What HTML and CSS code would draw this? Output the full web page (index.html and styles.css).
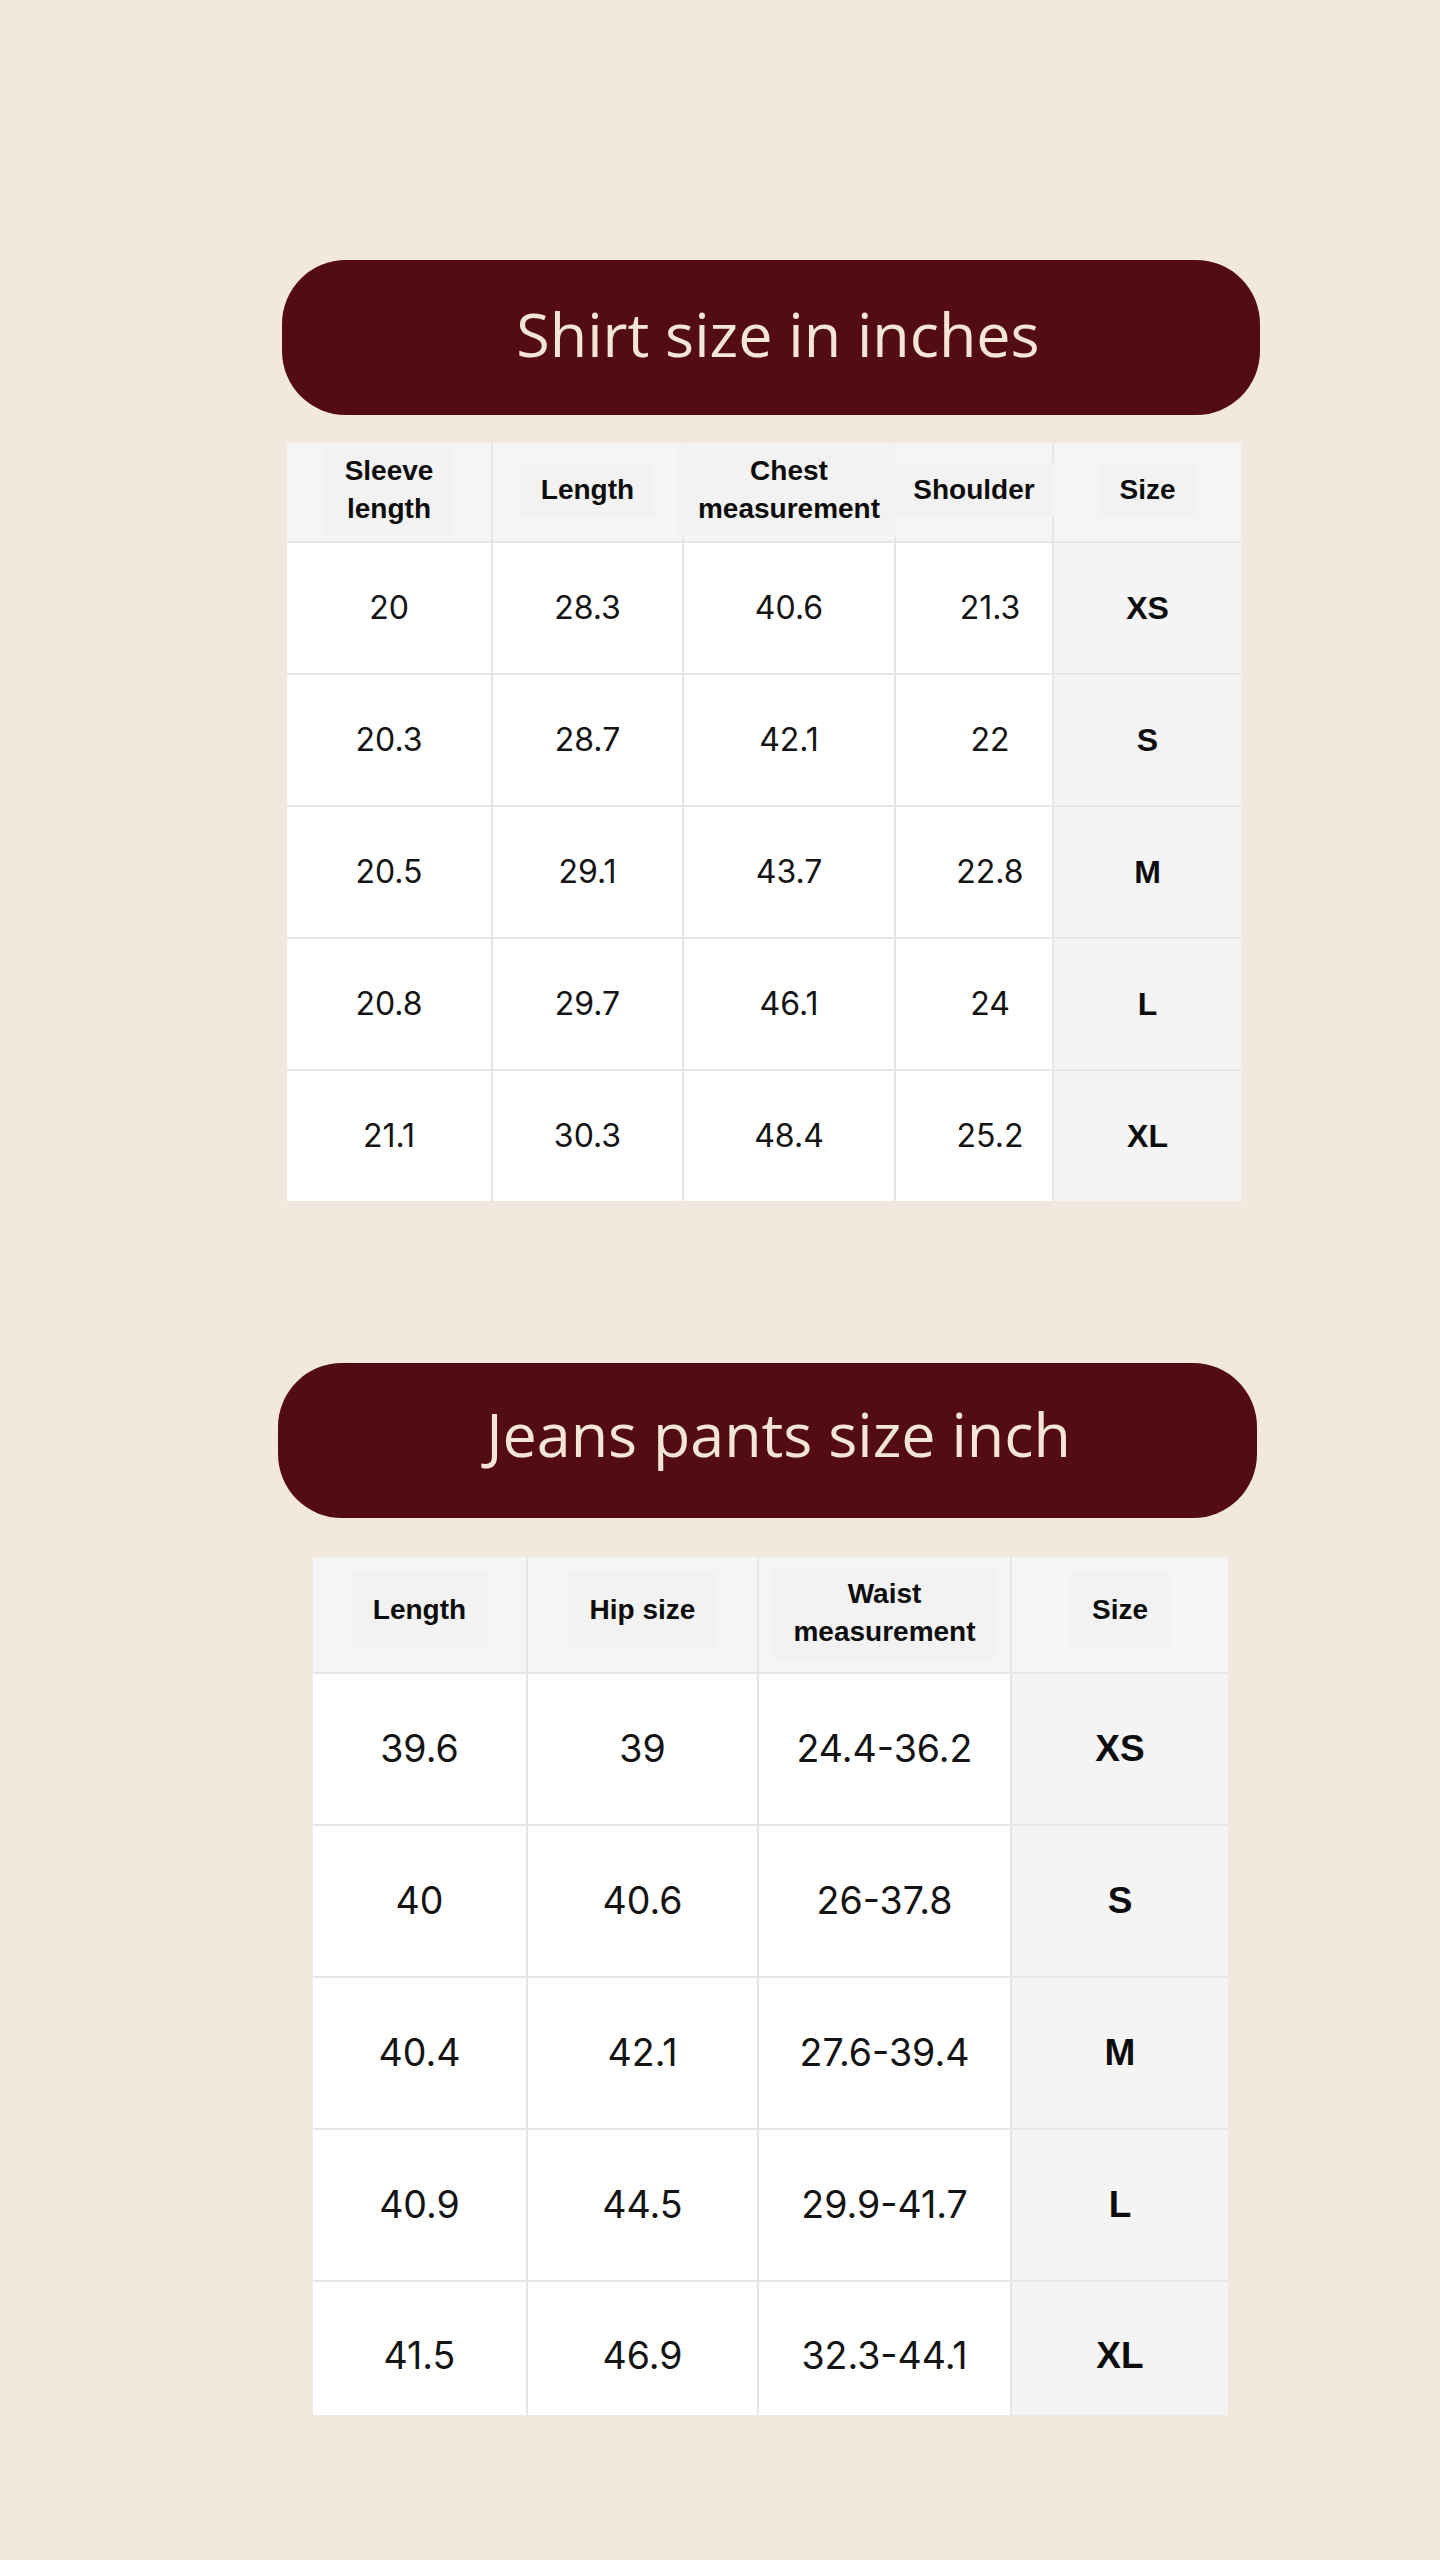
FILE: index.html
```html
<!DOCTYPE html>
<html lang="en">
<head>
<meta charset="utf-8">
<title>Size charts</title>
<link rel="stylesheet" href="styles.css">
</head>
<body>
<main class="page">
  <section class="chart chart-shirt">
    <h1 class="pill pill-shirt">Shirt size in inches</h1>
    <div class="grid grid-shirt">
      <div class="hd"><span>Sleeve<br>length</span></div>
      <div class="hd"><span>Length</span></div>
      <div class="hd"><span>Chest<br>measurement</span></div>
      <div class="hd"><span>Shoulder</span></div>
      <div class="hd"><span>Size</span></div>

      <div class="cell">20</div><div class="cell">28.3</div><div class="cell">40.6</div><div class="cell shoulder">21.3</div><div class="cell size">XS</div>
      <div class="cell">20.3</div><div class="cell">28.7</div><div class="cell">42.1</div><div class="cell shoulder">22</div><div class="cell size">S</div>
      <div class="cell">20.5</div><div class="cell">29.1</div><div class="cell">43.7</div><div class="cell shoulder">22.8</div><div class="cell size">M</div>
      <div class="cell">20.8</div><div class="cell">29.7</div><div class="cell">46.1</div><div class="cell shoulder">24</div><div class="cell size">L</div>
      <div class="cell">21.1</div><div class="cell">30.3</div><div class="cell">48.4</div><div class="cell shoulder">25.2</div><div class="cell size">XL</div>
    </div>
  </section>

  <section class="chart chart-jeans">
    <h1 class="pill pill-jeans">Jeans pants size inch</h1>
    <div class="grid grid-jeans">
      <div class="hd hd-one"><span>Length</span></div>
      <div class="hd hd-one"><span>Hip size</span></div>
      <div class="hd"><span>Waist<br>measurement</span></div>
      <div class="hd hd-one"><span>Size</span></div>

      <div class="cell">39.6</div><div class="cell">39</div><div class="cell">24.4-36.2</div><div class="cell size">XS</div>
      <div class="cell">40</div><div class="cell">40.6</div><div class="cell">26-37.8</div><div class="cell size">S</div>
      <div class="cell">40.4</div><div class="cell">42.1</div><div class="cell">27.6-39.4</div><div class="cell size">M</div>
      <div class="cell">40.9</div><div class="cell">44.5</div><div class="cell">29.9-41.7</div><div class="cell size">L</div>
      <div class="cell cut">41.5</div><div class="cell cut">46.9</div><div class="cell cut">32.3-44.1</div><div class="cell size cut">XL</div>
    </div>
  </section>
</main>
</body>
</html>
```

FILE: styles.css
```css
html, body {
  margin: 0;
  padding: 0;
}
body {
  background: #f2e8dd;
  min-height: 2560px;
}
.page {
  padding-top: 260px;
  display: flex;
  flex-direction: column;
}
.pill {
  margin: 0;
  height: 155px;
  box-sizing: border-box;
  background: #530b14;
  border-radius: 64px;
  color: #f4e6d6;
  font-family: "Open Sans", "Noto Sans", sans-serif;
  font-weight: 400;
  font-size: 61px;
  line-height: 1;
  display: flex;
  align-items: center;
  justify-content: center;
  padding-bottom: 8px;
}
.pill-shirt {
  margin-left: 282px;
  width: 978px;
  padding-left: 14px;
}
.pill-jeans {
  margin-left: 278px;
  width: 979px;
  padding-left: 22px;
  padding-bottom: 14px;
}
.grid {
  display: grid;
  background: #e6e6e6;
  gap: 2px;
}
.grid-shirt {
  margin-top: 28px;
  margin-left: 287px;
  width: 954px;
  grid-template-columns: 204px 189px 210px 156px 187px;
  grid-template-rows: 98px repeat(5, 130px);
}
.chart-jeans {
  margin-top: 162px;
}
.grid-jeans {
  margin-top: 39px;
  margin-left: 313px;
  width: 915px;
  grid-template-columns: 213px 229px 251px 216px;
  grid-template-rows: 115px repeat(4, 150px) 133px;
}
.hd {
  background: #f5f5f5;
  display: flex;
  align-items: center;
  justify-content: center;
  text-align: center;
  font-family: "Liberation Sans", Arial, sans-serif;
  font-weight: 700;
  font-size: 28px;
  line-height: 38px;
  color: #0d0d0d;
  padding-bottom: 4px;
  box-sizing: border-box;
}
.hd span {
  background: #f2f2f2;
  padding: 8px 20px;
}
.grid-jeans .hd-one {
  padding-bottom: 10px;
}
.grid-jeans .hd-one span {
  padding: 20px 22px;
}
.cell {
  background: #ffffff;
  display: flex;
  align-items: center;
  justify-content: center;
  font-family: Inter, "Noto Sans", sans-serif;
  font-size: 32px;
  line-height: 36px;
  color: #141414;
  box-sizing: border-box;
}
.grid-jeans .cell {
  font-size: 37.5px;
  line-height: 40px;
}
.cell.shoulder {
  padding-left: 32px;
}
.cell.size {
  background: #f4f4f4;
  font-family: "Liberation Sans", Arial, sans-serif;
  font-weight: 700;
  font-size: 32px;
  color: #0d0d0d;
}
.grid-jeans .cell.size {
  font-size: 37px;
}
.grid-jeans .cell.cut {
  align-items: flex-start;
  padding-top: 54px;
}
```
